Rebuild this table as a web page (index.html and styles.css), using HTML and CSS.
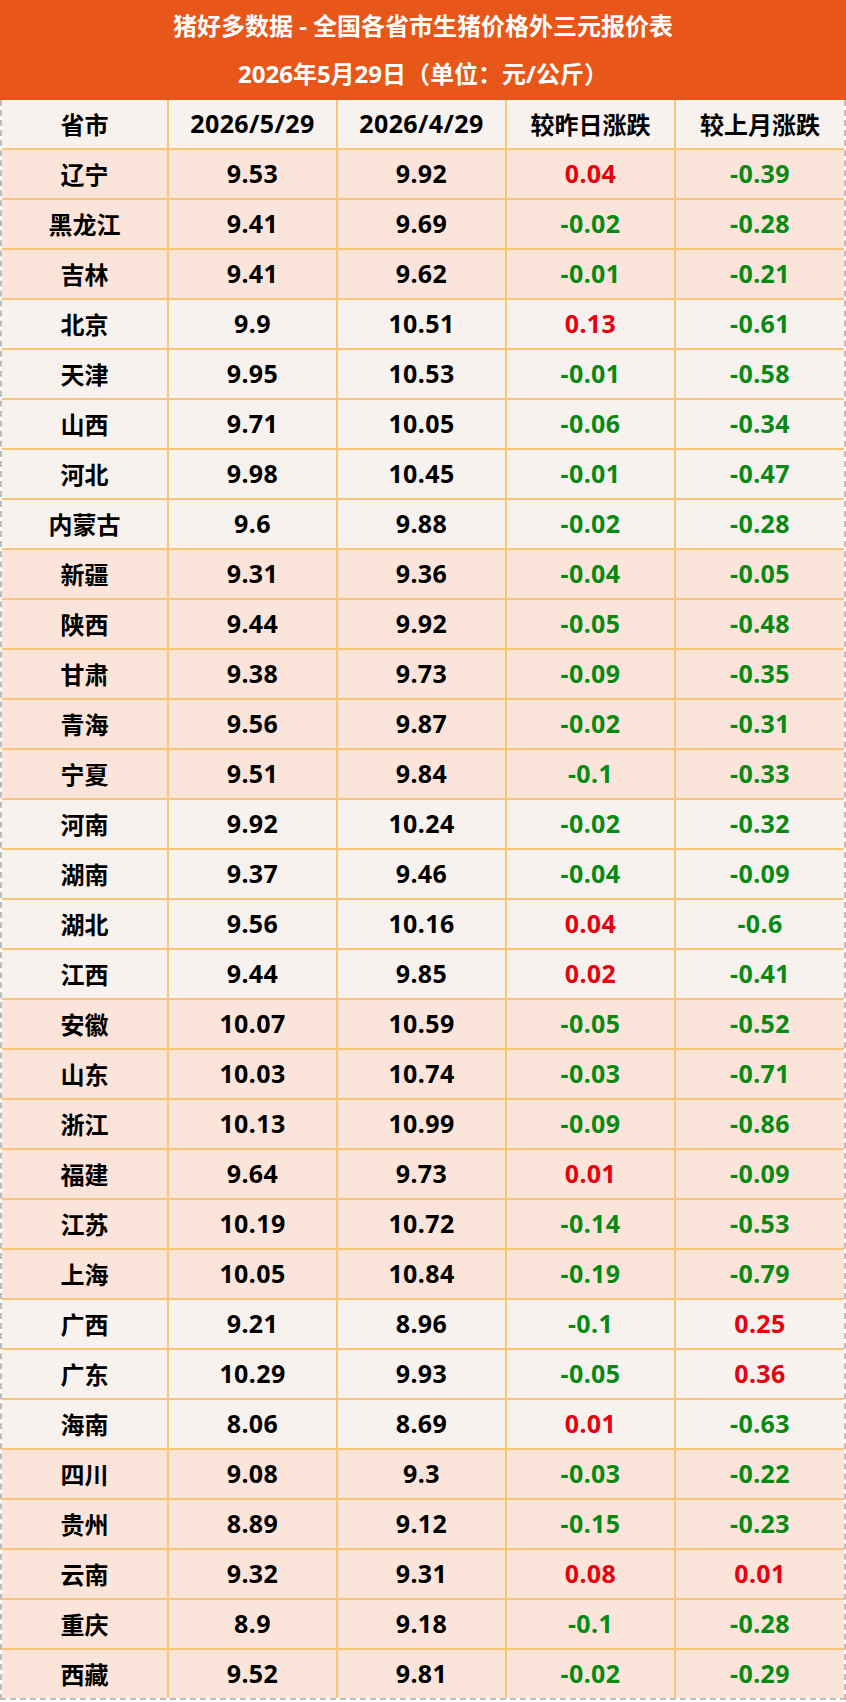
FILE: index.html
```html
<!DOCTYPE html>
<html lang="zh">
<head>
<meta charset="utf-8">
<title>猪好多数据</title>
<link rel="stylesheet" href="styles.css">
</head>
<body>
<div class="page">
  <div class="banner">
    <div class="banner-line">猪好多数据 - 全国各省市生猪价格外三元报价表</div>
    <div class="banner-line">2026年5月29日（单位：元/公斤）</div>
  </div>
  <div class="table">
    <div class="row head"><div class="cell">省市</div><div class="cell num">2026/5/29</div><div class="cell num">2026/4/29</div><div class="cell">较昨日涨跌</div><div class="cell">较上月涨跌</div></div>
    <div class="row peach"><div class="cell">辽宁</div><div class="cell num">9.53</div><div class="cell num">9.92</div><div class="cell num up">0.04</div><div class="cell num down">-0.39</div></div>
    <div class="row peach"><div class="cell">黑龙江</div><div class="cell num">9.41</div><div class="cell num">9.69</div><div class="cell num down">-0.02</div><div class="cell num down">-0.28</div></div>
    <div class="row peach"><div class="cell">吉林</div><div class="cell num">9.41</div><div class="cell num">9.62</div><div class="cell num down">-0.01</div><div class="cell num down">-0.21</div></div>
    <div class="row light"><div class="cell">北京</div><div class="cell num">9.9</div><div class="cell num">10.51</div><div class="cell num up">0.13</div><div class="cell num down">-0.61</div></div>
    <div class="row light"><div class="cell">天津</div><div class="cell num">9.95</div><div class="cell num">10.53</div><div class="cell num down">-0.01</div><div class="cell num down">-0.58</div></div>
    <div class="row light"><div class="cell">山西</div><div class="cell num">9.71</div><div class="cell num">10.05</div><div class="cell num down">-0.06</div><div class="cell num down">-0.34</div></div>
    <div class="row light"><div class="cell">河北</div><div class="cell num">9.98</div><div class="cell num">10.45</div><div class="cell num down">-0.01</div><div class="cell num down">-0.47</div></div>
    <div class="row light"><div class="cell">内蒙古</div><div class="cell num">9.6</div><div class="cell num">9.88</div><div class="cell num down">-0.02</div><div class="cell num down">-0.28</div></div>
    <div class="row peach"><div class="cell">新疆</div><div class="cell num">9.31</div><div class="cell num">9.36</div><div class="cell num down">-0.04</div><div class="cell num down">-0.05</div></div>
    <div class="row peach"><div class="cell">陕西</div><div class="cell num">9.44</div><div class="cell num">9.92</div><div class="cell num down">-0.05</div><div class="cell num down">-0.48</div></div>
    <div class="row peach"><div class="cell">甘肃</div><div class="cell num">9.38</div><div class="cell num">9.73</div><div class="cell num down">-0.09</div><div class="cell num down">-0.35</div></div>
    <div class="row peach"><div class="cell">青海</div><div class="cell num">9.56</div><div class="cell num">9.87</div><div class="cell num down">-0.02</div><div class="cell num down">-0.31</div></div>
    <div class="row peach"><div class="cell">宁夏</div><div class="cell num">9.51</div><div class="cell num">9.84</div><div class="cell num down">-0.1</div><div class="cell num down">-0.33</div></div>
    <div class="row light"><div class="cell">河南</div><div class="cell num">9.92</div><div class="cell num">10.24</div><div class="cell num down">-0.02</div><div class="cell num down">-0.32</div></div>
    <div class="row light"><div class="cell">湖南</div><div class="cell num">9.37</div><div class="cell num">9.46</div><div class="cell num down">-0.04</div><div class="cell num down">-0.09</div></div>
    <div class="row light"><div class="cell">湖北</div><div class="cell num">9.56</div><div class="cell num">10.16</div><div class="cell num up">0.04</div><div class="cell num down">-0.6</div></div>
    <div class="row light"><div class="cell">江西</div><div class="cell num">9.44</div><div class="cell num">9.85</div><div class="cell num up">0.02</div><div class="cell num down">-0.41</div></div>
    <div class="row peach"><div class="cell">安徽</div><div class="cell num">10.07</div><div class="cell num">10.59</div><div class="cell num down">-0.05</div><div class="cell num down">-0.52</div></div>
    <div class="row peach"><div class="cell">山东</div><div class="cell num">10.03</div><div class="cell num">10.74</div><div class="cell num down">-0.03</div><div class="cell num down">-0.71</div></div>
    <div class="row peach"><div class="cell">浙江</div><div class="cell num">10.13</div><div class="cell num">10.99</div><div class="cell num down">-0.09</div><div class="cell num down">-0.86</div></div>
    <div class="row peach"><div class="cell">福建</div><div class="cell num">9.64</div><div class="cell num">9.73</div><div class="cell num up">0.01</div><div class="cell num down">-0.09</div></div>
    <div class="row peach"><div class="cell">江苏</div><div class="cell num">10.19</div><div class="cell num">10.72</div><div class="cell num down">-0.14</div><div class="cell num down">-0.53</div></div>
    <div class="row peach"><div class="cell">上海</div><div class="cell num">10.05</div><div class="cell num">10.84</div><div class="cell num down">-0.19</div><div class="cell num down">-0.79</div></div>
    <div class="row light"><div class="cell">广西</div><div class="cell num">9.21</div><div class="cell num">8.96</div><div class="cell num down">-0.1</div><div class="cell num up">0.25</div></div>
    <div class="row light"><div class="cell">广东</div><div class="cell num">10.29</div><div class="cell num">9.93</div><div class="cell num down">-0.05</div><div class="cell num up">0.36</div></div>
    <div class="row light"><div class="cell">海南</div><div class="cell num">8.06</div><div class="cell num">8.69</div><div class="cell num up">0.01</div><div class="cell num down">-0.63</div></div>
    <div class="row peach"><div class="cell">四川</div><div class="cell num">9.08</div><div class="cell num">9.3</div><div class="cell num down">-0.03</div><div class="cell num down">-0.22</div></div>
    <div class="row peach"><div class="cell">贵州</div><div class="cell num">8.89</div><div class="cell num">9.12</div><div class="cell num down">-0.15</div><div class="cell num down">-0.23</div></div>
    <div class="row peach"><div class="cell">云南</div><div class="cell num">9.32</div><div class="cell num">9.31</div><div class="cell num up">0.08</div><div class="cell num up">0.01</div></div>
    <div class="row peach"><div class="cell">重庆</div><div class="cell num">8.9</div><div class="cell num">9.18</div><div class="cell num down">-0.1</div><div class="cell num down">-0.28</div></div>
    <div class="row peach last"><div class="cell">西藏</div><div class="cell num">9.52</div><div class="cell num">9.81</div><div class="cell num down">-0.02</div><div class="cell num down">-0.29</div></div>
  </div>
</div>
</body>
</html>
```

FILE: styles.css
```css
html, body {
  margin: 0;
  padding: 0;
  background: #ffffff;
}

.page {
  width: 846px;
  font-family: "Noto Sans", "Noto Sans CJK SC", sans-serif;
  font-weight: 700;
}

.banner {
  background: #e8561a;
  color: #ffffff;
  height: 100px;
  box-sizing: border-box;
  padding-top: 2px;
  text-align: center;
}

.banner-line {
  height: 48px;
  line-height: 48px;
  font-size: 24px;
}

.table {
  border-left: 2px dashed #bdbdbd;
  border-right: 2px dashed #bdbdbd;
  border-bottom: 2px dashed #bdbdbd;
}

.row {
  display: grid;
  grid-template-columns: 167px 169px 169px 169px 168px;
  height: 50px;
  box-sizing: border-box;
  border-bottom: 2px solid #f8c677;
}

.row.last {
  border-bottom: none;
  height: 48px;
}

.row.head,
.row.light {
  background: #f8f2ef;
}

.row.peach {
  background: #fbe4d9;
}

.cell {
  display: flex;
  align-items: center;
  justify-content: center;
  border-right: 2px solid #f8c677;
  font-size: 24px;
  color: #000000;
  padding-bottom: 2px;
}

.cell.num {
  font-size: 25px;
  letter-spacing: 0.4px;
}

.cell:last-child {
  border-right: none;
}

.cell.up {
  color: #e8000e;
}

.cell.down {
  color: #078a14;
}
```
